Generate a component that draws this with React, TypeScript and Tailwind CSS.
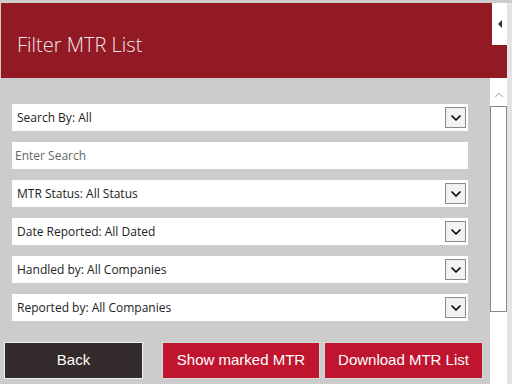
import { ChevronDown, ChevronUp } from "lucide-react";

const selects = [
  "Search By: All",
  null,
  "MTR Status: All Status",
  "Date Reported: All Dated",
  "Handled by: All Companies",
  "Reported by: All Companies",
];

function SelectRow({ label }: { label: string }) {
  return (
    <div className="flex h-[27px] items-center justify-between bg-white pl-[5px] pr-[2px] text-[12px] text-[#222]">
      <span>{label}</span>
      <div className="flex h-[21px] w-[21px] items-center justify-center border border-[#8a8a8a] bg-[#f2f2f2]">
        <ChevronDown size={16} strokeWidth={2.5} className="text-black" />
      </div>
    </div>
  );
}

export default function App() {
  return (
    <div
      className="flex h-[384px] w-[512px] flex-col overflow-hidden bg-[#cccccc] pt-[3px]"
      style={{ fontFamily: '"Open Sans", "Noto Sans", sans-serif' }}
    >
      <div className="flex">
        <div className="relative ml-[1px] h-[75px] w-[506px] bg-[#921a25]">
          <h1 className="pl-[16px] pt-[32px] text-[20px] font-light leading-none text-[#f3e6e6]">
            Filter MTR List
          </h1>
          {/* panel toggle tab */}
          <div className="absolute right-0 top-0 flex h-[42px] w-[15px] items-center justify-center bg-white">
            <div className="h-0 w-0 border-y-[4px] border-r-[4px] border-y-transparent border-r-[#333]" />
          </div>
        </div>
        <div className="w-[5px] bg-[#e4e4e4]" />
      </div>

      <div className="flex flex-1">
        <div className="flex w-[490px] flex-col">
          <div className="flex flex-col gap-[11px] pl-[12px] pr-[22px] pt-[26px]">
            {selects.map((label, i) =>
              label ? (
                <SelectRow key={i} label={label} />
              ) : (
                <div key={i} className="flex h-[27px] items-center bg-white pl-[3px] text-[12px] text-[#666]">
                  Enter Search
                </div>
              ),
            )}
          </div>

          <div
            className="mt-[21px] flex pl-[4px] text-[15px] text-white"
            style={{ fontFamily: '"Liberation Sans", Arial, sans-serif' }}
          >
            <button className="h-[37px] w-[139px] border border-[#f0f0f0] bg-[#332a2b]">Back</button>
            <button className="ml-[19px] h-[37px] w-[158px] border border-[#d8d8d8] bg-[#c0152f]">
              Show marked MTR
            </button>
            <button className="ml-[4px] h-[37px] w-[159px] border border-[#d8d8d8] bg-[#c0152f]">
              Download MTR List
            </button>
          </div>
        </div>

        {/* scrollbar */}
        <div className="flex w-[17px] flex-col bg-white">
          <div className="flex h-[28px] items-start justify-center pt-[10px]">
            <ChevronUp size={14} strokeWidth={1.5} className="text-[#888]" />
          </div>
          <div className="h-[206px] border border-[#888] bg-white" />
        </div>
        <div className="w-[5px] bg-[#e4e4e4]" />
      </div>
    </div>
  );
}
